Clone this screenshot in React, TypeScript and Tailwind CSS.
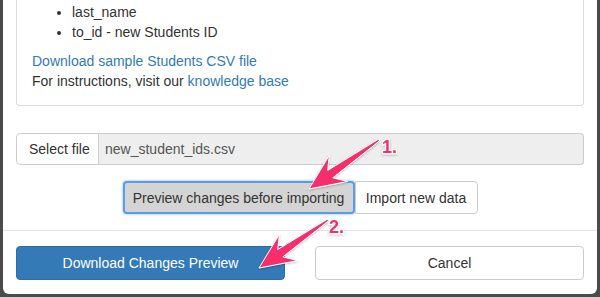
type Pt = [number, number];

function arrowPoints(tail: Pt, tip: Pt, headLen: number, headW: number, neckW: number, tailW: number) {
  const dx = tip[0] - tail[0];
  const dy = tip[1] - tail[1];
  const len = Math.hypot(dx, dy);
  const ux = dx / len;
  const uy = dy / len;
  const nx = -uy;
  const ny = ux;
  const at = (d: number, w: number): string =>
    `${tip[0] - ux * d + nx * w},${tip[1] - uy * d + ny * w}`;
  return [
    `${tail[0] + nx * tailW / 2},${tail[1] + ny * tailW / 2}`,
    at(headLen * 0.72, neckW / 2),
    at(headLen, headW / 2),
    `${tip[0]},${tip[1]}`,
    at(headLen, -headW / 2),
    at(headLen * 0.72, -neckW / 2),
    `${tail[0] - nx * tailW / 2},${tail[1] - ny * tailW / 2}`,
  ].join(" ");
}

function Arrows() {
  const pink = "#f72f6c";
  return (
    <svg className="absolute inset-0 pointer-events-none" width="600" height="297" viewBox="0 0 600 297">
      <defs>
        <filter id="glow" x="-20%" y="-20%" width="140%" height="140%">
          <feDropShadow dx="0" dy="1" stdDeviation="1" floodColor="#000" floodOpacity="0.25" />
        </filter>
      </defs>
      <polygon
        points={arrowPoints([379, 140], [309, 189], 36, 32, 9, 2)}
        fill={pink}
        stroke="#fff"
        strokeWidth="1"
        strokeLinejoin="round"
        filter="url(#glow)"
      />
      <polygon
        points={arrowPoints([328, 220], [259, 268], 36, 32, 9, 2)}
        fill={pink}
        stroke="#fff"
        strokeWidth="1"
        strokeLinejoin="round"
        filter="url(#glow)"
      />
      <text
        x="382"
        y="153"
        fill={pink}
        stroke="#fff"
        strokeWidth="2.5"
        paintOrder="stroke"
        filter="url(#glow)"
        style={{ fontFamily: '"Liberation Sans", Arial, sans-serif', fontWeight: 700, fontSize: 18 }}
      >
        1.
      </text>
      <text
        x="329"
        y="233"
        fill={pink}
        stroke="#fff"
        strokeWidth="2.5"
        paintOrder="stroke"
        filter="url(#glow)"
        style={{ fontFamily: '"Liberation Sans", Arial, sans-serif', fontWeight: 700, fontSize: 18 }}
      >
        2.
      </text>
    </svg>
  );
}

export default function App() {
  return (
    <div className="relative w-[600px] h-[297px] overflow-hidden bg-[#4b4b4b] px-[3px] font-['Liberation_Sans',Arial,sans-serif] text-[14px] leading-[20px] text-[#333]">
      <div className="w-[594px] h-[294px] bg-white rounded-b-[6px] flex flex-col">
        {/* body */}
        <div className="px-[13px]">
          <div className="border border-t-0 border-[#dcdcdc] rounded-b-[4px] pt-[2px] pb-[14px] px-[15px]">
            <ul className="list-disc pl-[40px] mb-[9px]">
              <li>last_name</li>
              <li>to_id - new Students ID</li>
            </ul>
            <a className="block text-[#337ab7]">Download sample Students CSV file</a>
            <p>
              For instructions, visit our <a className="text-[#337ab7]">knowledge base</a>
            </p>
          </div>

          <div className="mt-[27px] flex h-[32px]">
            <div className="w-[83px] shrink-0 border border-[#ccc] rounded-l-[4px] bg-white flex items-center pl-[12px]">
              Select file
            </div>
            <div className="flex-1 border border-l-0 border-[#ccc] rounded-r-[4px] bg-[#eee] flex items-center pl-[6px] text-[#555]">
              new_student_ids.csv
            </div>
          </div>

          <div className="mt-[16px] flex justify-center">
            <div className="h-[33px] w-[232px] border-2 border-[#5b9ce8] rounded-[4px] bg-[#d4d4d4] shadow-[0_0_3px_#7fb3f0] flex items-center justify-center">
              Preview changes before importing
            </div>
            <div className="h-[33px] w-[123px] border border-[#ccc] rounded-r-[4px] bg-white flex items-center justify-center">
              Import new data
            </div>
          </div>
        </div>

        <div className="mt-[16px] border-t border-[#e5e5e5]" />

        {/* footer */}
        <div className="px-[13px] pt-[15px] grid grid-cols-2 gap-[30px]">
          <div className="h-[34px] rounded-[4px] bg-[#337ab7] border border-[#2e6da4] text-white flex items-center justify-center">
            Download Changes Preview
          </div>
          <div className="h-[34px] rounded-[4px] bg-white border border-[#ccc] flex items-center justify-center">
            Cancel
          </div>
        </div>
      </div>
      <Arrows />
    </div>
  );
}
